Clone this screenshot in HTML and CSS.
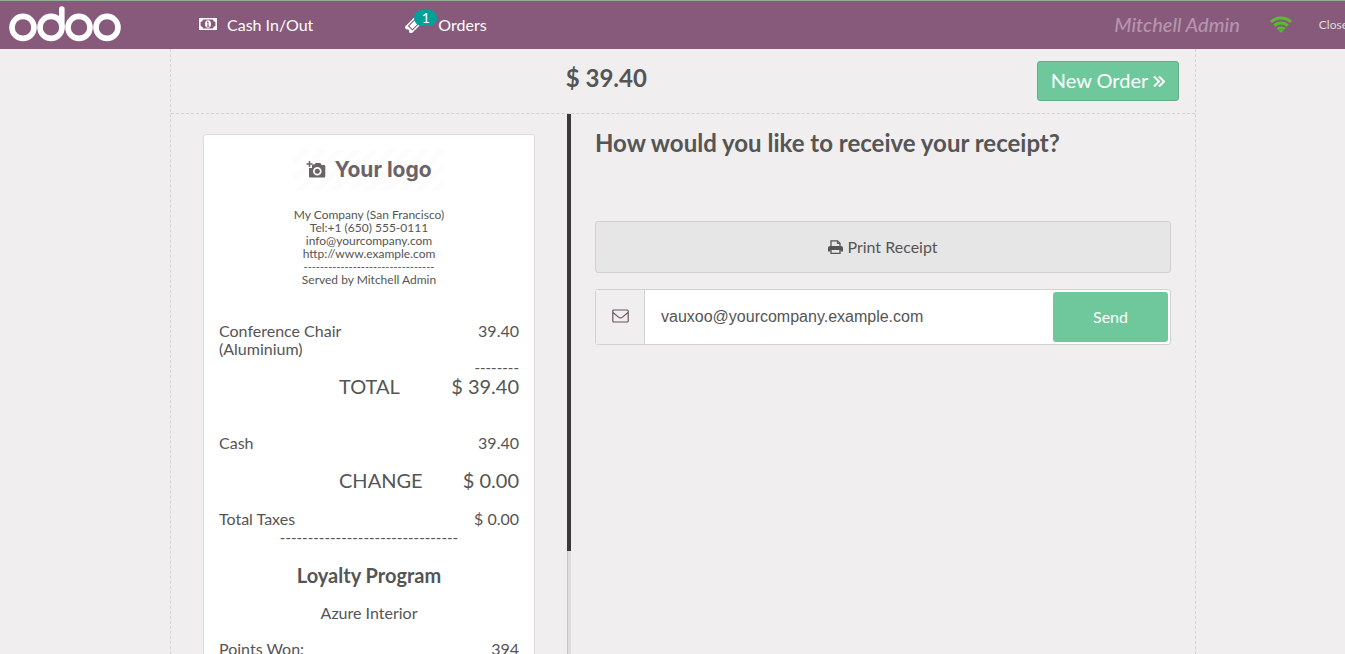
FILE: index.html
```
<!DOCTYPE html>
<html lang="en">

<head>
    <meta charset="UTF-8">
    <meta name="viewport" content="width=device-width, initial-scale=1.0">
    <title>Odoo POS</title>
    <link rel="stylesheet" href="styles.css">
</head>

<body>
    <div class="pos">
        <header class="topbar">
            <a href="#" class="brand" aria-label="odoo">
                <svg width="112" height="36" viewBox="0 0 112 36" fill="none" stroke="#fff" stroke-width="5.6">
                    <circle cx="14" cy="21.4" r="11" />
                    <circle cx="42" cy="21.4" r="11" />
                    <circle cx="70" cy="21.4" r="11" />
                    <circle cx="98" cy="21.4" r="11" />
                    <path d="M52.8 3v18" stroke-linecap="round" />
                </svg>
            </a>
            <button type="button" class="nav-button cash">
                <svg width="18" height="12" viewBox="0 0 18 12">
                    <path fill="#fff" fill-rule="evenodd" d="M0 0h18v12H0zM4 1.600A2.600 2.600 0 0 1 1.600 4v4A2.600 2.600 0 0 1 4 10.400h10A2.600 2.600 0 0 1 16.400 8V4A2.600 2.600 0 0 1 14 1.600z" />
                    <ellipse cx="9" cy="6" rx="3" ry="3.800" fill="#fff" />
                    <path d="M8 4.500l1-.8v4.300M7.800 8.200h2.600" stroke="#875a7b" fill="none" />
                </svg>
                <span>Cash In/Out</span>
            </button>
            <button type="button" class="nav-button orders">
                <span class="ticket">
                    <svg width="17" height="17" viewBox="0 0 17 17">
                        <g transform="rotate(-45 8.500 8.500)">
                            <path fill="#fff" d="M0 4h17v3a1.800 1.800 0 0 0 0 3.500v3H0v-3A1.800 1.800 0 0 0 0 7z" />
                            <path fill="none" stroke="#875a7b" d="M4 6h9v5.500H4z" />
                        </g>
                    </svg>
                    <span class="badge">1</span>
                </span>
                <span>Orders</span>
            </button>
            <span class="username">Mitchell Admin</span>
            <svg class="wifi" width="22" height="17" viewBox="0 0 22 17" fill="none" stroke="#5bb936" stroke-width="3">
                <path d="M1 6a14.500 14.500 0 0 1 20 0" />
                <path d="M4.300 9.700a9.800 9.800 0 0 1 13.400 0" />
                <path d="M7.500 13.200a5.200 5.200 0 0 1 7 0" stroke-width="2.600" />
                <path d="M11 17l-2.200-2.400a3.200 3.200 0 0 1 4.400 0z" fill="#5bb936" stroke="none" />
            </svg>
            <button type="button" class="close">Close</button>
        </header>

        <main class="screen">
            <div class="screen-top">
                <h1 class="amount">$ 39.40</h1>
                <button type="button" class="next">
                    New Order
                    <svg width="12" height="13" viewBox="0 0 12 13" fill="none" stroke="#fff" stroke-width="2">
                        <path d="M1 1.500l5 5-5 5M6 1.500l5 5-5 5" />
                    </svg>
                </button>
            </div>

            <div class="screen-content">
                <section class="receipt-pane">
                    <div class="receipt">
                        <div class="receipt-logo">
                            <svg width="20" height="18" viewBox="0 0 20 18">
                                <path fill="#6c6367" fill-rule="evenodd" d="M6 3.500h2.500l1.200-1.500h4.600l1.500 2H18a1.300 1.300 0 0 1 1.300 1.300v10A1.300 1.300 0 0 1 18 16.600H4.300A1.300 1.300 0 0 1 3 15.300V7h3zM11.300 6a4.300 4.300 0 1 0 0 8.600 4.300 4.300 0 0 0 0-8.600z" />
                                <circle cx="11.300" cy="10.300" r="2.500" fill="#6c6367" />
                                <path stroke="#6c6367" stroke-width="1.500" d="M3.500 0v6M.5 3h6" />
                            </svg>
                            <span>Your logo</span>
                        </div>
                        <div class="company">
                            <div>My Company (San Francisco)</div>
                            <div>Tel:+1 (650) 555-0111</div>
                            <div>info@yourcompany.com</div>
                            <div>http://www.example.com</div>
                            <div class="rule-small">--------------------------------</div>
                            <div>Served by Mitchell Admin</div>
                        </div>
                        <div class="line product">
                            <span class="product-name">Conference Chair (Aluminium)</span>
                            <span>39.40</span>
                        </div>
                        <div class="rule rule-right">--------</div>
                        <div class="line total">
                            <span>TOTAL</span>
                            <span>$ 39.40</span>
                        </div>
                        <div class="line payment">
                            <span>Cash</span>
                            <span>39.40</span>
                        </div>
                        <div class="line total change">
                            <span>CHANGE</span>
                            <span>$ 0.00</span>
                        </div>
                        <div class="line taxes">
                            <span>Total Taxes</span>
                            <span>$ 0.00</span>
                        </div>
                        <div class="rule">--------------------------------</div>
                        <h2 class="loyalty">Loyalty Program</h2>
                        <div class="customer">Azure Interior</div>
                        <div class="line points">
                            <span>Points Won:</span>
                            <span>394</span>
                        </div>
                    </div>
                </section>
                <div class="scrollbar">
                    <div class="scrollbar-thumb"></div>
                </div>
                <section class="options">
                    <h2 class="question">How would you like to receive your receipt?</h2>
                    <button type="button" class="print">
                        <svg width="15" height="14" viewBox="0 0 15 14">
                            <path fill="none" stroke="#555" stroke-width="1.300" d="M3 7V.8h6.500L12 3.200V7M3 10v3.300h9V10" />
                            <path fill="none" stroke="#555" d="M9.300 1v2.500H12" />
                            <path fill="#555" d="M2 6h11a2 2 0 0 1 2 2v3.500h-2.500V10h-10v1.500H0V8a2 2 0 0 1 2-2z" />
                        </svg>
                        Print Receipt
                    </button>
                    <form class="send-email">
                        <label class="email-icon" for="email" aria-label="Email">
                            <svg width="17" height="14" viewBox="0 0 17 14" fill="none" stroke="#6b5560" stroke-width="1.200">
                                <rect x=".8" y="1" width="15.400" height="12" rx="1" />
                                <path d="M1 3.500l5.500 4.600q2 1.600 4 0L16 3.500" />
                            </svg>
                        </label>
                        <input type="email" id="email" value="vauxoo@yourcompany.example.com">
                        <button type="button" class="send">Send</button>
                    </form>
                </section>
            </div>
        </main>
    </div>
</body>

</html>
```
FILE: styles.css
```
* {
    box-sizing: border-box;
}

html {
    height: 100%;
    overflow: hidden;
}

body {
    height: 100%;
    margin: 0;
    overflow: hidden;
    background-color: #f0eeee;
    color: #555;
    font-family: Lato, "Liberation Sans", sans-serif;
    font-size: 16px;
}

h1,
h2 {
    margin: 0;
    font-weight: bold;
}

button {
    font-family: inherit;
    cursor: pointer;
}

svg {
    flex: none;
}

.pos {
    display: flex;
    flex-direction: column;
    min-width: 1366px;
    height: 100%;
}

/* Top bar */
.topbar {
    display: flex;
    align-items: center;
    flex: none;
    height: 49px;
    padding: 0 18px 2px 9px;
    border-top: 1px solid #93ae96;
    background-color: #875a7b;
    color: #fff;
}

.brand {
    display: flex;
}

.nav-button {
    display: flex;
    align-items: center;
    padding: 0;
    border: none;
    background: none;
    color: #fff;
    font-size: 16px;
}

.cash {
    gap: 10px;
    margin-left: 78px;
}

.orders {
    gap: 16px;
    margin-left: 92px;
}

.ticket {
    display: flex;
    position: relative;
}

.badge {
    position: absolute;
    top: -6px;
    left: 9px;
    width: 23px;
    height: 16px;
    border-radius: 8px;
    background-color: #00a09d;
    font-size: 14px;
    line-height: 16px;
    text-align: center;
}

.username {
    margin-left: auto;
    color: #b595ad;
    font-size: 20px;
    font-style: italic;
    font-weight: 500;
}

.wifi {
    margin: 0 27px 0 30px;
}

.close {
    padding: 0;
    border: none;
    background: none;
    color: #ddd;
    font-size: 12px;
}

/* Receipt screen */
.screen {
    display: flex;
    flex-direction: column;
    flex: 1;
    width: 100%;
    max-width: 1026px;
    min-height: 0;
    margin: 0 auto;
    border: 1px dashed #d3d3d3;
    border-width: 0 1px;
}

.screen-top {
    display: flex;
    align-items: center;
    flex: none;
    height: 65px;
    padding: 0 16px 0 5px;
    border-bottom: 1px dashed #d3d3d3;
}

.amount {
    flex: 1;
    padding-bottom: 8px;
    font-size: 24px;
    text-align: center;
}

.next {
    height: 40px;
    padding: 0 13px 2px;
    border: 1px solid #64af8a;
    border-radius: 3px;
    background-color: #6ec89b;
    color: #fff;
    font-size: 20px;
}

.screen-content {
    display: grid;
    grid-template-columns: 396fr 4px 624fr;
    flex: 1;
    min-height: 0;
}

.receipt-pane {
    overflow: hidden;
}

.receipt {
    width: 332px;
    margin: 20px auto;
    padding: 15px;
    border: 1px solid #dcdcdc;
    border-radius: 3px;
    background-color: #fff;
    line-height: 18px;
}

.receipt-logo {
    display: flex;
    align-items: center;
    justify-content: center;
    gap: 8px;
    width: 150px;
    height: 40px;
    margin: 0 auto 18px;
    background: repeating-linear-gradient(135deg, #fff 0 6px, #fcfcfc 6px 12px);
    color: #6c6367;
    font-family: Inter, Lato, sans-serif;
    font-size: 21px;
    font-weight: bold;
    white-space: nowrap;
}

.company {
    margin-bottom: 36px;
    font-size: 12px;
    line-height: 13px;
    text-align: center;
}

.rule-small {
    font-size: 11px;
}

.line {
    display: flex;
    justify-content: space-between;
}

.product-name {
    width: 150px;
}

.rule {
    font-size: 15px;
    text-align: center;
}

.rule-right {
    text-align: right;
}

.total {
    padding-left: 120px;
    font-size: 20px;
    line-height: 20px;
}

.payment {
    margin-top: 38px;
}

.change {
    margin-top: 18px;
}

.taxes {
    margin-top: 20px;
}

.customer {
    text-align: center;
}

.loyalty {
    margin: 18px 0;
    font-size: 20px;
    line-height: 22px;
    text-align: center;
}

.points {
    margin-top: 18px;
}

.scrollbar {
    border-left: 1px solid #c6c6c6;
    background-color: #dedede;
}

.scrollbar-thumb {
    width: 4px;
    height: 81%;
    margin-left: -1px;
    background-color: #3a3a3a;
}

/* Print and email options */
.options {
    padding: 13px 24px;
}

.question {
    margin-bottom: 62px;
    font-size: 24px;
    line-height: 32px;
}

.print {
    display: flex;
    align-items: center;
    justify-content: center;
    gap: 4px;
    width: 100%;
    height: 52px;
    margin-bottom: 16px;
    padding-bottom: 2px;
    border: 1px solid #d0d2d2;
    border-radius: 3px;
    background-color: #e6e6e6;
    color: #555;
    font-size: 16px;
}

.send-email {
    display: flex;
    height: 56px;
    border: 1px solid #d0d2d2;
    border-radius: 3px;
    background-color: #fff;
}

.email-icon {
    display: flex;
    align-items: center;
    justify-content: center;
    width: 49px;
    padding-bottom: 2px;
    border-right: 1px solid #d0d2d2;
    background-color: #f0eeee;
}

.send-email input {
    flex: 1;
    min-width: 0;
    padding: 0 16px;
    border: none;
    outline: none;
    background: none;
    color: #555;
    font-family: "Liberation Sans", Arial, sans-serif;
    font-size: 16px;
}

.send {
    width: 115px;
    margin: 2px;
    padding-bottom: 2px;
    border: none;
    border-radius: 3px;
    background-color: #6ec89b;
    color: #fff;
    font-size: 16px;
}
```
